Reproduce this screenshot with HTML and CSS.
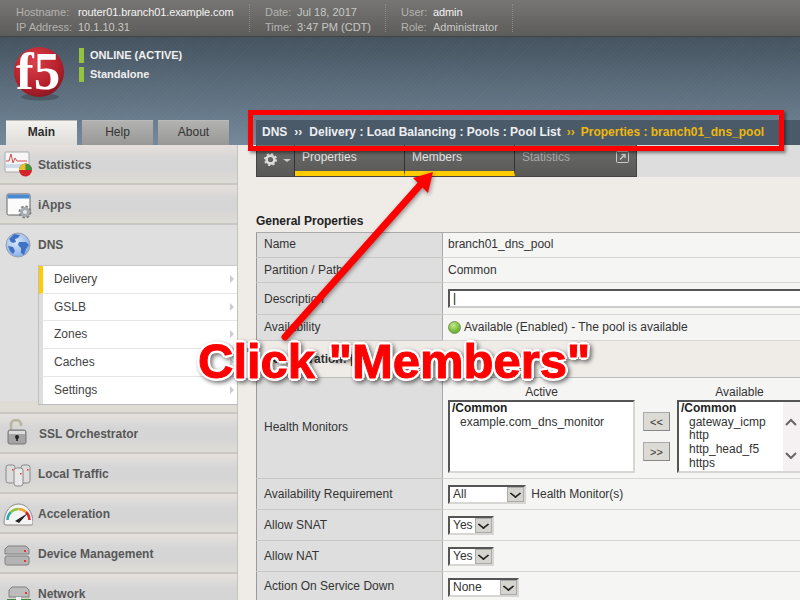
FILE: index.html
```html
<!DOCTYPE html>
<html lang="en">
<head>
    <meta charset="UTF-8">
    <title>Pool Properties</title>
    <link rel="stylesheet" href="styles.css">
</head>
<body>

<div class="page">

    <header class="topbar">
        <div class="info info-host">
            <span class="lbl">Hostname:</span><span class="val bright">router01.branch01.example.com</span>
            <span class="lbl">IP Address:</span><span class="val">10.1.10.31</span>
        </div>
        <div class="info info-date">
            <span class="lbl">Date:</span><span class="val">Jul 18, 2017</span>
            <span class="lbl">Time:</span><span class="val">3:47 PM (CDT)</span>
        </div>
        <div class="info info-user">
            <span class="lbl">User:</span><span class="val bright">admin</span>
            <span class="lbl">Role:</span><span class="val">Administrator</span>
        </div>
    </header>

    <div class="banner">
        <div class="brand">
            <svg class="logo" width="56" height="66" viewBox="0 -10 56 66">
                <defs>
                    <radialGradient id="ball" cx="0.4" cy="0.3" r="0.8">
                        <stop offset="0" stop-color="#d8404a"/>
                        <stop offset="0.6" stop-color="#b8202c"/>
                        <stop offset="1" stop-color="#7c1620"/>
                    </radialGradient>
                </defs>
                <ellipse cx="27" cy="50" rx="19" ry="3.5" fill="#3c4650" opacity="0.55"/>
                <circle cx="26" cy="25" r="25" fill="url(#ball)"/>
                <text x="3" y="42" class="logo-text" font-size="53">f5</text>
            </svg>
            <div class="status">
                <div class="status-line">ONLINE (ACTIVE)</div>
                <div class="status-line">Standalone</div>
            </div>
        </div>
        <div class="nav-row">
            <nav class="tabs">
                <a class="tab active">Main</a>
                <a class="tab">Help</a>
                <a class="tab">About</a>
            </nav>
            <div class="crumbs">
                <span>DNS</span><span class="sep">&rsaquo;&rsaquo;</span><span>Delivery : Load Balancing : Pools : Pool List</span><span class="sep gold">&rsaquo;&rsaquo;</span><span class="gold">Properties : branch01_dns_pool</span>
            </div>
        </div>
    </div>

    <div class="layout">
        <aside class="sidebar">
            <div class="section">
                <svg class="icon" width="30" height="30" viewBox="0 0 30 30">
                    <rect x="2" y="2" width="24" height="20" rx="1" fill="#f6f6f6" stroke="#aaa"/>
                    <rect x="3" y="14" width="22" height="4" fill="#cfdcec"/>
                    <path d="M3 11h3l2-7 2 9 2-5 2 3h10" fill="none" stroke="#d9484c"/>
                    <circle cx="22.500" cy="20" r="6.500" fill="#d3242c"/>
                    <path d="M22.500 20V13.500a6.500 6.500 0 0 1 6.500 6.500z" fill="#3c9a3a"/>
                    <path d="M22.500 20H16a6.500 6.500 0 0 1 6.500-6.500z" fill="#e2c32c"/>
                </svg>
                <span>Statistics</span>
            </div>
            <div class="section">
                <svg class="icon" width="30" height="30" viewBox="0 0 30 30">
                    <rect x="4" y="4" width="23" height="21" rx="1.500" fill="#fbfbfb" stroke="#666"/>
                    <rect x="4.500" y="4.500" width="22" height="4" fill="#4a8ad0"/>
                    <circle cx="22" cy="22" r="4.500" fill="#a8adb0" stroke="#7c8084" stroke-width="4" stroke-dasharray="2 1.500"/>
                    <circle cx="22" cy="22" r="5" fill="#a6abae"/>
                    <circle cx="22" cy="22" r="2" fill="#e4e6e8"/>
                </svg>
                <span>iApps</span>
            </div>
            <div class="section open">
                <div class="section-head">
                    <svg class="icon" width="30" height="30" viewBox="0 0 30 30">
                        <defs>
                            <radialGradient id="sea" cx="0.4" cy="0.35" r="0.75">
                                <stop offset="0" stop-color="#dbe8fa"/>
                                <stop offset="1" stop-color="#7ea6e6"/>
                            </radialGradient>
                        </defs>
                        <circle cx="15" cy="15" r="12" fill="url(#sea)" stroke="#9a9fa8"/>
                        <path d="M6 9l5-5 6 1-2 3-3 1 1 3-3 1-2-1zM16 12l7 0 3 3-3 4-2 6-3-2 0-5-3-3zM5 16l5 1 2 4-2 3-3-3z" fill="#3f72c2"/>
                    </svg>
                    <span>DNS</span>
                </div>
                <ul class="submenu">
                    <li class="current">Delivery</li>
                    <li>GSLB</li>
                    <li>Zones</li>
                    <li>Caches</li>
                    <li>Settings</li>
                </ul>
            </div>
            <div class="section">
                <svg class="icon" width="30" height="30" viewBox="0 0 30 30">
                    <path d="M8 11V6a5 5 0 0 1 10 0v1" fill="none" stroke="#b8b49c" stroke-width="2.500"/>
                    <rect x="5" y="11" width="18" height="14" rx="2" fill="#a4a4a4" stroke="#777"/>
                    <rect x="6" y="12" width="16" height="3" fill="#dcdcdc"/>
                    <circle cx="14" cy="18" r="2" fill="#222"/>
                    <rect x="13.200" y="18" width="1.600" height="4" fill="#222"/>
                </svg>
                <span class="shift">SSL Orchestrator</span>
            </div>
            <div class="section">
                <svg class="icon" width="30" height="30" viewBox="0 0 30 30">
                    <rect x="3" y="6" width="9" height="18" rx="2.500" fill="#dcdcdc" stroke="#888"/>
                    <rect x="18" y="6" width="9" height="18" rx="2.500" fill="#dcdcdc" stroke="#888"/>
                    <rect x="11" y="9" width="9" height="18" rx="2.500" fill="#e8e8e8" stroke="#888"/>
                    <rect x="9" y="10" width="1.500" height="1.500" fill="#e33"/>
                    <rect x="24" y="10" width="1.500" height="1.500" fill="#e33"/>
                    <rect x="17" y="14" width="1.500" height="1.500" fill="#e33"/>
                </svg>
                <span>Local Traffic</span>
            </div>
            <div class="section">
                <svg class="icon" width="30" height="30" viewBox="0 0 30 30">
                    <path d="M1 24C1 12 8 5 15.500 5S30 12 30 24q0 2-2 2H3q-2 0-2-2z" fill="#f4f4f2" stroke="#8a8a8a"/>
                    <path d="M4.500 21a11 11 0 0 1 3.500-8" fill="none" stroke="#2aa8a8" stroke-width="2.500"/>
                    <path d="M8 13a11 11 0 0 1 7.500-3" fill="none" stroke="#8cc63f" stroke-width="2.500"/>
                    <path d="M15.500 10a11 11 0 0 1 7.500 3" fill="none" stroke="#f0a030" stroke-width="2.500"/>
                    <path d="M23 13a11 11 0 0 1 3.500 8" fill="none" stroke="#d8262c" stroke-width="2.500"/>
                    <path d="M12 22l13-8-9 10z" fill="#222"/>
                </svg>
                <span>Acceleration</span>
            </div>
            <div class="section">
                <svg class="icon" width="30" height="30" viewBox="0 0 30 30">
                    <path d="M2 10l3-3h18l3 3v5H2z" fill="#b4b4b4" stroke="#808080"/>
                    <rect x="2" y="17" width="24" height="9" rx="2" fill="#b4b4b4" stroke="#808080"/>
                    <rect x="21" y="11" width="2" height="2" fill="#e33"/>
                    <rect x="21" y="21" width="2" height="2" fill="#e33"/>
                </svg>
                <span>Device Management</span>
            </div>
            <div class="section">
                <svg class="icon" width="30" height="30" viewBox="0 0 30 30">
                    <path d="M6 11l3-3h14l3 3v7H6z" fill="#bcbcbc" stroke="#808080"/>
                    <rect x="22" y="13" width="2" height="2" fill="#e33"/>
                    <rect x="4" y="20" width="24" height="4" fill="#3f8a3f"/>
                    <rect x="13" y="18" width="5" height="6" fill="#eee"/>
                </svg>
                <span>Network</span>
            </div>
        </aside>

        <main class="content">
            <div class="subtabs-band">
                <div class="subtabs">
                    <div class="subtab gear-tab">
                        <svg width="13" height="13" viewBox="0 0 14 14">
                            <circle cx="7" cy="7" r="4.200" fill="none" stroke="#ddd" stroke-width="2.800"/>
                            <circle cx="7" cy="7" r="6" fill="none" stroke="#ddd" stroke-width="2" stroke-dasharray="2.300 2.400"/>
                        </svg>
                        <span class="caret"></span>
                    </div>
                    <div class="subtab on">Properties</div>
                    <div class="subtab on">Members</div>
                    <div class="subtab off">
                        Statistics
                        <svg class="popout" width="13" height="12" viewBox="0 0 13 12">
                            <rect x="0.500" y="0.500" width="12" height="11" rx="1" fill="none" stroke="#ccc"/>
                            <path d="M4 8.500L8.500 4M5.500 3.500h3.500v3.500" fill="none" stroke="#ccc" stroke-width="1.300"/>
                        </svg>
                    </div>
                </div>
            </div>

            <h3 class="heading">General Properties</h3>

            <table class="props">
                <tr class="row-name">
                    <th>Name</th>
                    <td>branch01_dns_pool</td>
                </tr>
                <tr class="row-part">
                    <th>Partition / Path</th>
                    <td>Common</td>
                </tr>
                <tr class="row-desc">
                    <th>Description</th>
                    <td><div class="textbox">|</div></td>
                </tr>
                <tr class="row-avail">
                    <th>Availability</th>
                    <td><span class="dot"></span>Available (Enabled) - The pool is available</td>
                </tr>
                <tr class="row-config">
                    <th colspan="2">Configuration: |</th>
                </tr>
                <tr class="row-monitors">
                    <th>Health Monitors</th>
                    <td>
                        <div class="monitors">
                            <div class="mon-col mon-active">
                                <div class="mon-title">Active</div>
                                <div class="listbox">
                                    <b>/Common</b>
                                    <div class="item">example.com_dns_monitor</div>
                                </div>
                            </div>
                            <div class="mover">
                                <button class="move-btn">&lt;&lt;</button>
                                <button class="move-btn">&gt;&gt;</button>
                            </div>
                            <div class="mon-col mon-avail">
                                <div class="mon-title">Available</div>
                                <div class="listbox with-scroll">
                                    <b>/Common</b>
                                    <div class="item">gateway_icmp</div>
                                    <div class="item">http</div>
                                    <div class="item">http_head_f5</div>
                                    <div class="item">https</div>
                                    <div class="scroll">
                                        <svg width="12" height="42" viewBox="0 0 12 42">
                                            <path d="M1 8l5-5 5 5M1 36l5 5 5-5" fill="none" stroke="#666" stroke-width="2"/>
                                        </svg>
                                    </div>
                                </div>
                            </div>
                        </div>
                    </td>
                </tr>
                <tr class="row-sel">
                    <th>Availability Requirement</th>
                    <td><span class="select sel-all">All<i class="arrow"></i></span> Health Monitor(s)</td>
                </tr>
                <tr class="row-sel">
                    <th>Allow SNAT</th>
                    <td><span class="select sel-yes">Yes<i class="arrow"></i></span></td>
                </tr>
                <tr class="row-sel">
                    <th>Allow NAT</th>
                    <td><span class="select sel-yes">Yes<i class="arrow"></i></span></td>
                </tr>
                <tr class="row-sel row-last">
                    <th>Action On Service Down</th>
                    <td><span class="select sel-none">None<i class="arrow"></i></span></td>
                </tr>
            </table>
        </main>
    </div>

    <!-- annotation drawn over the screenshot -->
    <div class="red-box"></div>
    <svg class="red-arrow" width="800" height="600" viewBox="0 0 800 600">
        <path d="M285 337L421 184" stroke="#f00" stroke-width="7" stroke-linecap="round" fill="none"/>
        <path d="M433 172L413 178L428 193z" fill="#f00"/>
    </svg>
    <div class="callout">Click "Members"</div>

</div>

</body>
</html>
```

FILE: styles.css
```css
* {
    box-sizing: border-box;
}

body {
    margin: 0;
    font-family: 'Liberation Sans', Arial, sans-serif;
    font-size: 12px;
    color: #333;
    background: #efece8;
}

.page {
    position: relative;
    width: 800px;
    height: 600px;
    overflow: hidden;
}

/* top info bar */
.topbar {
    display: flex;
    height: 37px;
    padding-top: 4px;
    background: linear-gradient(#777674, #6b6a68 45%, #5c5c5a);
    border-bottom: 1px solid #444;
    font-size: 11px;
}

.info {
    display: grid;
    grid-template-rows: 15px 15px;
    align-items: center;
    height: 28px;
    border-right: 1px dotted #8a8a88;
}

.info-host {
    grid-template-columns: 62px auto;
    width: 250px;
    padding-left: 16px;
}

.info-date {
    grid-template-columns: 32px auto;
    width: 136px;
    padding-left: 15px;
}

.info-user {
    grid-template-columns: 32px auto;
    width: 127px;
    padding-left: 15px;
}

.lbl {
    color: #b4b4b0;
}

.val {
    color: #c8c8c4;
}

.val.bright {
    letter-spacing: -0.1px;
    color: #f4f4f4;
}

/* logo and tabs */
.banner {
    height: 108px;
    background:
        repeating-linear-gradient(135deg, rgba(255, 255, 255, 0.02) 0 1px, transparent 1px 3px),
        linear-gradient(#45535f, #74899b);
}

.brand {
    display: flex;
    height: 83px;
    padding: 0 0 0 13px;
}

.logo-text {
    font-family: 'Liberation Serif', serif;
    font-weight: bold;
    fill: #fff;
}

.status {
    margin-left: 10px;
    padding-top: 11px;
}

.status-line {
    height: 15px;
    margin-bottom: 3.500px;
    padding-left: 6px;
    border-left: 5px solid #93c43f;
    font-size: 11px;
    font-weight: bold;
    line-height: 15px;
    color: #f0f0f0;
}

.nav-row {
    display: flex;
    height: 25px;
}

.tabs {
    display: flex;
    gap: 5px;
    width: 256px;
    padding-left: 6px;
}

.tab {
    width: 71px;
    text-align: center;
    line-height: 23px;
    background: linear-gradient(#b2b2b0, #989896);
    border-top: 1px solid #bbb;
    color: #333;
}

.tab.active {
    background: linear-gradient(#f4f2ee, #dfddd9);
    font-weight: bold;
    color: #2e2e2e;
}

.crumbs {
    display: flex;
    flex: 1;
    padding-left: 6px;
    line-height: 24px;
    background: #4b5a69;
    font-weight: bold;
    color: #eceff2;
}

.sep {
    margin: 0 7px 0 7px;
}

.sep.gold {
    margin: 0 6px;
}

.gold {
    color: #eeb80c;
}

/* left menu */
.layout {
    display: flex;
    height: 455px;
}

.sidebar {
    width: 238px;
    flex-shrink: 0;
    border-right: 1px solid #c4c2be;
    background: #dfdcd5;
}

.section {
    display: flex;
    align-items: center;
    height: 40px;
    padding: 2px 0 0 3px;
    border-bottom: 2px solid #c9c7c4;
    background: linear-gradient(#e6e0dc, #d6d6d6 35%, #d5d5d5 65%, #dfdcd5);
    font-weight: bold;
    color: #575757;
}

.section .icon {
    flex-shrink: 0;
    margin-right: 5px;
}

.section .shift {
    margin-left: 1px;
}

.section.open {
    display: block;
    height: 189px;
    padding: 0;
    background: linear-gradient(#dfdfdf 94%, #dfdcd5 94%);
}

.section-head {
    display: flex;
    align-items: center;
    height: 40px;
    padding-left: 3px;
}

.submenu {
    list-style: none;
    margin: 0 0 0 38px;
    padding: 0;
    border-top: 1px solid #c8c8c8;
    border-left: 1px solid #c0c0c0;
    border-bottom: 1px solid #bbb;
    background: #fff;
    font-weight: normal;
    color: #444;
}

.submenu li {
    position: relative;
    height: 27.700px;
    padding-left: 11px;
    border-left: 4px solid #ddd;
    border-bottom: 1px solid #e6e6e6;
    line-height: 26px;
}

.submenu li:last-child {
    height: 27px;
    border-bottom: 0;
}

.submenu li.current {
    border-left-color: #fc0;
}

.submenu li::after {
    content: "";
    position: absolute;
    right: 3px;
    top: 9px;
    border-left: 4px solid #ccc;
    border-top: 4px solid transparent;
    border-bottom: 4px solid transparent;
}

/* right side */
.content {
    flex: 1;
    overflow: hidden;
}

.subtabs-band {
    height: 32px;
    margin-left: 18px;
    background: #ddd;
}

.subtabs {
    display: flex;
    width: 381px;
    height: 32px;
    border: 1px solid #444;
    border-top: 0;
    background: linear-gradient(#6c6c6a, #585856);
}

.subtab {
    position: relative;
    padding: 5px 0 0 7px;
    border-right: 1px solid #333;
    color: #e4e4e4;
}

.gear-tab {
    display: flex;
    gap: 6px;
    width: 38px;
    padding: 8px 0 0 7px;
}

.caret {
    margin-top: 6px;
    border-top: 3px solid #ccc;
    border-left: 4px solid transparent;
    border-right: 4px solid transparent;
    height: 0;
}

.subtab.on {
    width: 110px;
    border-bottom: 5px solid #fc0;
}

.subtab.off {
    flex: 1;
    border-right: 0;
    color: #a8a8a8;
}

.popout {
    position: absolute;
    right: 7px;
    top: 6px;
}

.heading {
    margin: 37px 0 0 18px;
    height: 18px;
    font-size: 12px;
    line-height: 14px;
    color: #222;
}

.props {
    margin-left: 18px;
    width: 560px;
    table-layout: fixed;
    border-collapse: collapse;
    border-top: 1px solid #aaa;
    border-left: 1px solid #999;
}

.props th {
    width: 186px;
    padding: 0 0 0 7px;
    background: #dedede;
    border-bottom: 1px solid #c8c6c2;
    border-right: 1px solid #aaa;
    font-weight: normal;
    text-align: left;
    color: #333;
}

.props td {
    padding: 0 0 0 5px;
    background: #f5f5f3;
    border-bottom: 1px solid #d8d6d2;
    color: #333;
}

.row-name,
.row-part {
    height: 25px;
}

.props .row-name th,
.props .row-name td,
.props .row-avail th,
.props .row-avail td,
.props .row-last th {
    padding-bottom: 2px;
}

.row-desc {
    height: 32px;
}

.row-avail {
    height: 26px;
}

.row-config {
    height: 37px;
}

.props .row-config th {
    background: #efece8;
    border-right: 0;
    border-bottom: 1px solid #bbb;
    font-weight: bold;
}

.props .row-monitors th {
    padding-bottom: 2px;
}

.row-sel {
    height: 31px;
}

.textbox {
    height: 19px;
    margin-right: -20px;
    padding-left: 3px;
    border: 2px solid #ccc;
    border-top-color: #555;
    border-left-color: #555;
    background: #fff;
    line-height: 15px;
    color: #111;
}

.dot {
    display: inline-block;
    width: 13px;
    height: 13px;
    margin-right: 3px;
    vertical-align: -3px;
    border-radius: 50%;
    background: radial-gradient(circle at 40% 30%, #c4e88c, #6cb22c 70%);
    border: 1px solid #7a9a5a;
}

.monitors {
    display: flex;
    height: 100px;
}

.mon-title {
    height: 22px;
    padding-top: 7px;
    text-align: center;
    line-height: 14px;
}

.mon-active {
    width: 187px;
}

.mon-avail {
    width: 125px;
}

.mover {
    display: flex;
    flex-direction: column;
    gap: 11px;
    width: 42px;
    padding: 34px 0 0 8px;
}

.move-btn {
    width: 27px;
    height: 19px;
    padding: 0;
    border: 1px solid #aaa;
    border-right-color: #888;
    border-bottom-color: #888;
    background: #dcdad4;
    font-family: 'Liberation Sans', Arial, sans-serif;
    font-size: 11px;
    color: #333;
}

.listbox {
    position: relative;
    height: 73px;
    padding: 0 0 0 2px;
    border: 2px solid #d8d6d2;
    border-top-color: #555;
    border-left-color: #555;
    background: #fff;
    line-height: 13.700px;
    color: #333;
}

.listbox b {
    color: #222;
}

.item {
    padding-left: 8px;
}

.scroll {
    position: absolute;
    top: 0;
    right: 0;
    bottom: 0;
    width: 17px;
    padding: 15px 0 0 2px;
    background: #f5f0f2;
}

.scroll svg {
    display: block;
}

.select {
    display: inline-block;
    position: relative;
    height: 19px;
    margin-right: 2px;
    padding-left: 3px;
    vertical-align: middle;
    border: 2px solid #d8d6d2;
    border-top-color: #555;
    border-left-color: #555;
    background: #fff;
    line-height: 15px;
}

.sel-all {
    width: 78px;
}

.sel-yes {
    width: 46px;
}

.sel-none {
    width: 71px;
}

.arrow {
    position: absolute;
    top: 0;
    right: 0;
    bottom: 0;
    width: 17px;
    background: #d6d4ce;
    border: 1px solid #aaa;
}

.arrow::after {
    content: "";
    position: absolute;
    left: 3px;
    top: 1px;
    width: 7px;
    height: 7px;
    border-right: 2px solid #222;
    border-bottom: 2px solid #222;
    transform: scale(0.9, 0.7) rotate(45deg);
}

/* annotation */
.red-box {
    position: absolute;
    left: 248px;
    top: 110px;
    width: 536px;
    height: 41px;
    border: 5px solid #f00;
    box-shadow: 2px 2px 3px rgba(0, 0, 0, 0.45);
}

.red-arrow {
    position: absolute;
    left: 0;
    top: 0;
    filter: drop-shadow(1px 2px 2px rgba(0, 0, 0, 0.4));
}

.callout {
    position: absolute;
    left: 198px;
    top: 333px;
    font-size: 49px;
    font-weight: bold;
    line-height: 56px;
    white-space: nowrap;
    color: #f00;
    -webkit-text-stroke: 1px #f00;
    text-shadow:
        3px 0 0 #fff, -3px 0 0 #fff, 0 3px 0 #fff, 0 -3px 0 #fff,
        2px 2px 0 #fff, -2px 2px 0 #fff, 2px -2px 0 #fff, -2px -2px 0 #fff;
    filter: drop-shadow(2px 2px 2px rgba(0, 0, 0, 0.55));
}
```
